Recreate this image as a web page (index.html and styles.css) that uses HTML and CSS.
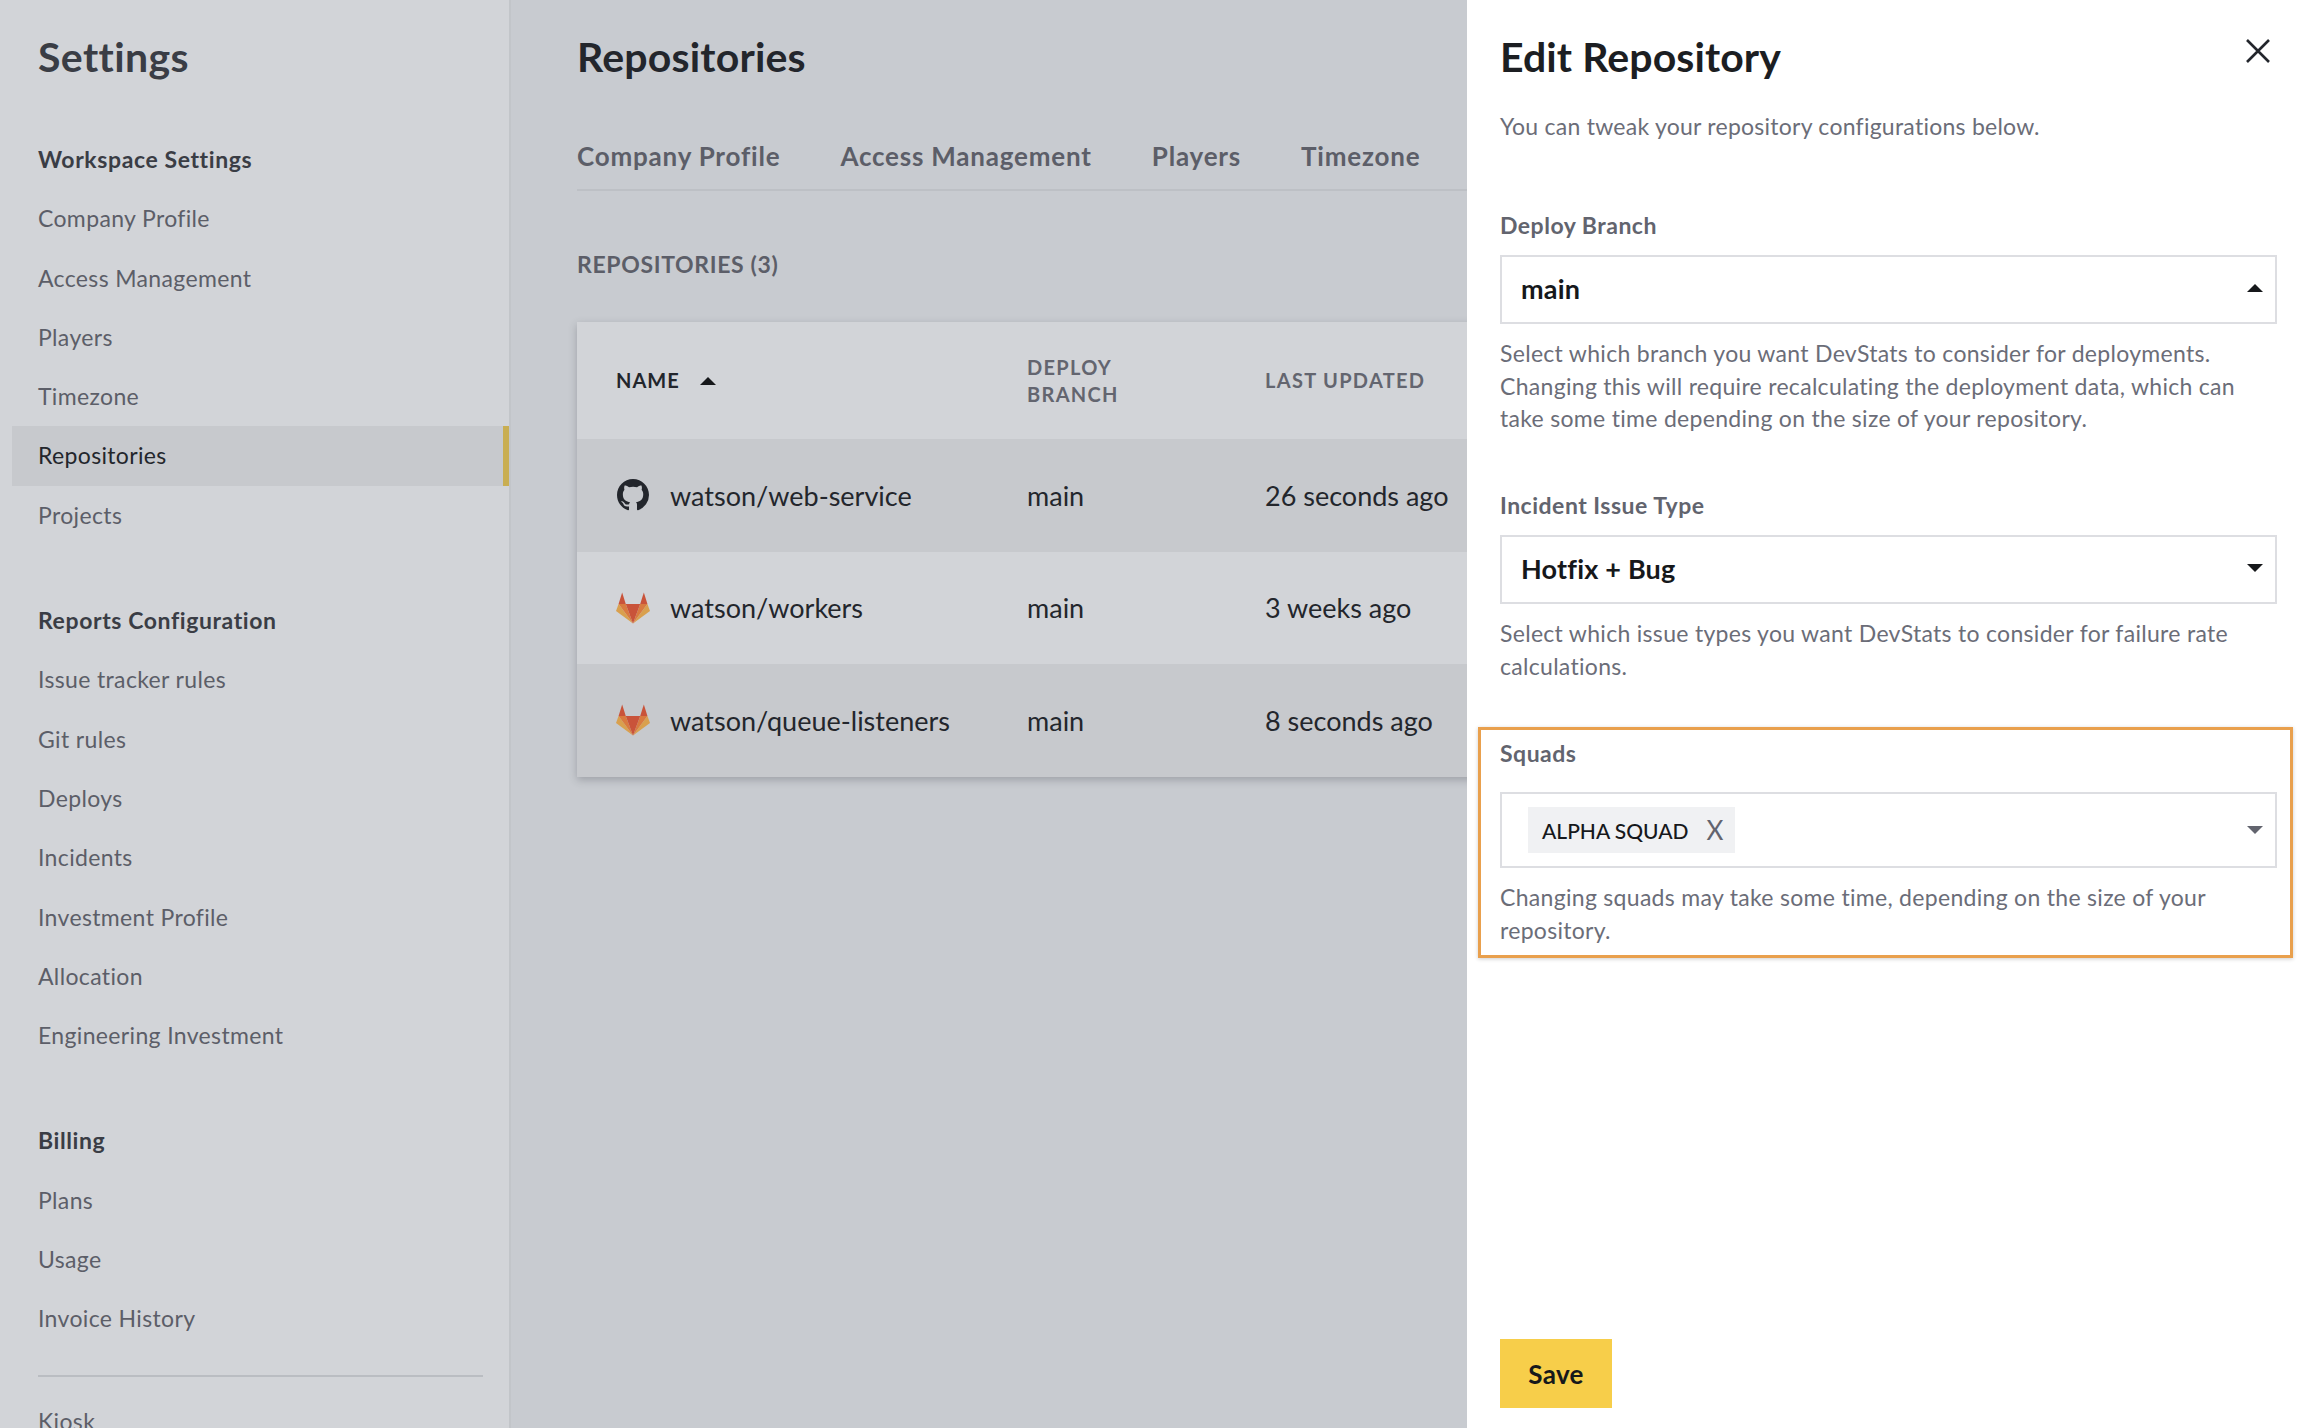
FILE: index.html
```html
<!DOCTYPE html>
<html lang="en">
<head>
    <meta charset="UTF-8">
    <title>Edit Repository</title>
    <link rel="stylesheet" href="styles.css">
</head>
<body>
    <div class="page">
        <aside class="sidebar">
            <h1 class="sidebar-title">Settings</h1>

            <div class="nav-group">
                <div class="nav-heading">Workspace Settings</div>
                <a class="nav-item">Company Profile</a>
                <a class="nav-item">Access Management</a>
                <a class="nav-item">Players</a>
                <a class="nav-item">Timezone</a>
                <a class="nav-item active">Repositories</a>
                <a class="nav-item">Projects</a>
            </div>

            <div class="nav-group">
                <div class="nav-heading">Reports Configuration</div>
                <a class="nav-item">Issue tracker rules</a>
                <a class="nav-item">Git rules</a>
                <a class="nav-item">Deploys</a>
                <a class="nav-item">Incidents</a>
                <a class="nav-item">Investment Profile</a>
                <a class="nav-item">Allocation</a>
                <a class="nav-item">Engineering Investment</a>
            </div>

            <div class="nav-group">
                <div class="nav-heading">Billing</div>
                <a class="nav-item">Plans</a>
                <a class="nav-item">Usage</a>
                <a class="nav-item">Invoice History</a>
            </div>

            <div class="nav-divider"></div>
            <a class="nav-item">Kiosk</a>
        </aside>

        <main class="main">
            <h1 class="main-title">Repositories</h1>

            <nav class="tabs">
                <a class="tab">Company Profile</a>
                <a class="tab">Access Management</a>
                <a class="tab">Players</a>
                <a class="tab">Timezone</a>
            </nav>

            <div class="section-label">REPOSITORIES (3)</div>

            <div class="repo-table">
                <div class="repo-row repo-head">
                    <div class="col-name sorted">NAME <span class="arrow-up dark sort-arrow"></span></div>
                    <div>DEPLOY<br>BRANCH</div>
                    <div>LAST UPDATED</div>
                </div>
                <div class="repo-row shaded">
                    <div class="col-name">
                        <svg class="repo-icon" viewBox="0 0 16 16" fill="#23262c"><path d="M8 0C3.58 0 0 3.58 0 8c0 3.54 2.29 6.53 5.47 7.59.4.07.55-.17.55-.38 0-.19-.01-.82-.01-1.49-2.01.37-2.53-.49-2.69-.94-.09-.23-.48-.94-.82-1.13-.28-.15-.68-.52-.01-.53.63-.01 1.08.58 1.23.82.72 1.21 1.87.87 2.33.66.07-.52.28-.87.51-1.07-1.78-.2-3.64-.89-3.64-3.95 0-.87.31-1.59.82-2.15-.08-.2-.36-1.02.08-2.12 0 0 .67-.21 2.2.82.64-.18 1.32-.27 2-.27.68 0 1.36.09 2 .27 1.53-1.04 2.2-.82 2.2-.82.44 1.1.16 1.92.08 2.12.51.56.82 1.27.82 2.15 0 3.07-1.87 3.75-3.65 3.95.29.25.54.73.54 1.48 0 1.07-.01 1.93-.01 2.2 0 .21.15.46.55.38A8.013 8.013 0 0016 8c0-4.42-3.58-8-8-8z"/></svg>
                        watson/web-service
                    </div>
                    <div>main</div>
                    <div>26 seconds ago</div>
                </div>
                <div class="repo-row">
                    <div class="col-name">
                        <svg class="repo-icon" viewBox="0 0 33 30">
                            <polygon fill="#c9533a" points="6,0 2.5,11 9.5,11"/>
                            <polygon fill="#c9533a" points="27,0 30.5,11 23.5,11"/>
                            <polygon fill="#d9a04e" points="2.5,11 0,18 16.5,30"/>
                            <polygon fill="#d9a04e" points="30.5,11 33,18 16.5,30"/>
                            <polygon fill="#d97a3f" points="2.5,11 9.5,11 16.5,30"/>
                            <polygon fill="#d97a3f" points="30.5,11 23.5,11 16.5,30"/>
                            <polygon fill="#c9533a" points="9.5,11 23.5,11 16.5,30"/>
                        </svg>
                        watson/workers
                    </div>
                    <div>main</div>
                    <div>3 weeks ago</div>
                </div>
                <div class="repo-row shaded">
                    <div class="col-name">
                        <svg class="repo-icon" viewBox="0 0 33 30">
                            <polygon fill="#c9533a" points="6,0 2.5,11 9.5,11"/>
                            <polygon fill="#c9533a" points="27,0 30.5,11 23.5,11"/>
                            <polygon fill="#d9a04e" points="2.5,11 0,18 16.5,30"/>
                            <polygon fill="#d9a04e" points="30.5,11 33,18 16.5,30"/>
                            <polygon fill="#d97a3f" points="2.5,11 9.5,11 16.5,30"/>
                            <polygon fill="#d97a3f" points="30.5,11 23.5,11 16.5,30"/>
                            <polygon fill="#c9533a" points="9.5,11 23.5,11 16.5,30"/>
                        </svg>
                        watson/queue-listeners
                    </div>
                    <div>main</div>
                    <div>8 seconds ago</div>
                </div>
            </div>
        </main>

        <section class="panel">
            <div class="panel-head">
                <h2 class="panel-title">Edit Repository</h2>
                <svg class="close-icon" viewBox="0 0 24 24" fill="none" stroke="#23262c" stroke-width="2.6"><path d="M1 1l22 22M23 1L1 23"/></svg>
            </div>
            <p class="panel-desc">You can tweak your repository configurations below.</p>

            <label class="field-label first">Deploy Branch</label>
            <div class="select">
                <span class="select-value">main</span>
                <span class="arrow-up dark"></span>
            </div>
            <p class="help">Select which branch you want DevStats to consider for deployments. Changing this will require recalculating the deployment data, which can take some time depending on the size of your repository.</p>

            <label class="field-label">Incident Issue Type</label>
            <div class="select">
                <span class="select-value">Hotfix + Bug</span>
                <span class="arrow-down dark"></span>
            </div>
            <p class="help">Select which issue types you want DevStats to consider for failure rate calculations.</p>

            <div class="squads-field">
                <label class="field-label squads-label">Squads</label>
                <div class="select squads-select">
                    <span class="chip">ALPHA SQUAD <span class="chip-x">X</span></span>
                    <span class="arrow-down"></span>
                </div>
                <p class="help">Changing squads may take some time, depending on the size of your repository.</p>
                <div class="highlight"></div>
            </div>

            <button class="save-btn">Save</button>
        </section>
    </div>
</body>
</html>
```

FILE: styles.css
```css
* {
    box-sizing: border-box;
}

body {
    margin: 0;
    font-family: "Lato", "Noto Sans", sans-serif;
    color: #23262c;
}

.page {
    display: flex;
    height: 1428px;
    overflow: hidden;
}

/* sidebar */
.sidebar {
    width: 511px;
    flex-shrink: 0;
    background: #d2d4d8;
    border-right: 2px solid #c2c5c9;
    overflow: hidden;
}

.sidebar-title {
    margin: 0;
    padding-left: 38px;
    height: 130px;
    padding-top: 29px;
    font-size: 41px;
    line-height: 56px;
    font-weight: 700;
    letter-spacing: 0.4px;
    color: #3a3d45;
}

.nav-group {
    margin-bottom: 46px;
}

.nav-heading {
    padding-left: 38px;
    height: 59.3px;
    line-height: 59px;
    font-size: 23px;
    font-weight: 700;
    letter-spacing: 0.6px;
    color: #3a3d45;
}

.nav-item {
    display: block;
    height: 59.3px;
    line-height: 59px;
    margin-left: 12px;
    padding-left: 26px;
    font-size: 23px;
    letter-spacing: 0.35px;
    color: #5c5e68;
}

.nav-item.active {
    background: #c7c9cd;
    border-right: 6px solid #c9ae52;
    color: #23262c;
}

.nav-divider {
    height: 2px;
    margin: -20px 26px 15px 38px;
    background: #babdc2;
}

/* main */
.main {
    flex: 1;
    min-width: 0;
    padding-left: 66px;
    background: #c8cbd0;
    overflow: hidden;
}

.main-title {
    margin: 0;
    height: 114px;
    padding-top: 29px;
    font-size: 41px;
    line-height: 56px;
    font-weight: 700;
    letter-spacing: 0.2px;
    color: #23262c;
}

.tabs {
    display: flex;
    gap: 60px;
    height: 77px;
    border-bottom: 2px solid #bdc0c5;
    white-space: nowrap;
}

.tab {
    font-size: 26px;
    line-height: 84px;
    font-weight: 700;
    letter-spacing: 0.8px;
    color: #5c5e68;
}

.section-label {
    margin-top: 55px;
    margin-bottom: 40px;
    font-size: 23px;
    line-height: 36px;
    font-weight: 700;
    letter-spacing: 0.65px;
    color: #5c5e68;
}

.repo-table {
    width: 1000px;
    box-shadow: 0 3px 8px rgba(60, 64, 72, 0.3);
}

.repo-row {
    display: grid;
    grid-template-columns: 411px 238px 1fr;
    align-items: center;
    height: 112.5px;
    padding-left: 39px;
    background: #d2d4d8;
    font-size: 27px;
    color: #23262c;
}

.repo-row.shaded {
    background: #c7c9cd;
}

.repo-head {
    height: 117px;
    font-size: 20px;
    line-height: 27px;
    font-weight: 700;
    letter-spacing: 1.3px;
    color: #63656f;
}

.col-name {
    display: flex;
    align-items: center;
}

.col-name.sorted {
    color: #23262c;
    letter-spacing: 1px;
}

.sort-arrow {
    margin-left: 20px;
}

.repo-icon {
    width: 34px;
    height: 32px;
    margin-right: 20px;
}

/* edit panel */
.panel {
    width: 837px;
    flex-shrink: 0;
    display: flex;
    flex-direction: column;
    padding: 0 27px 20px 33px;
    background: #fff;
}

.panel-head {
    display: flex;
    justify-content: space-between;
    height: 110px;
    padding-top: 29px;
}

.panel-title {
    margin: 0;
    font-size: 41px;
    line-height: 56px;
    font-weight: 700;
    letter-spacing: 0.1px;
    color: #1c1e22;
}

.close-icon {
    width: 24px;
    height: 24px;
    margin-top: 10px;
    margin-right: 7px;
}

.panel-desc {
    margin: 0;
    font-size: 23px;
    line-height: 32px;
    letter-spacing: 0.25px;
    color: #6b6d78;
}

.field-label {
    display: block;
    margin-top: 54.5px;
    font-size: 23px;
    line-height: 32px;
    font-weight: 700;
    letter-spacing: 0.5px;
    color: #62646e;
}

.field-label.first {
    margin-top: 67px;
}

.select {
    display: flex;
    align-items: center;
    justify-content: space-between;
    height: 69px;
    margin-top: 14px;
    padding: 0 12px 3px 19px;
    border: 2px solid #dddee2;
}

.select-value {
    font-size: 27px;
    font-weight: 700;
    letter-spacing: 0.2px;
    color: #16181b;
}

.arrow-up,
.arrow-down {
    display: inline-block;
    width: 0;
    height: 0;
    border-left: 8px solid transparent;
    border-right: 8px solid transparent;
}

.arrow-up {
    border-bottom: 8px solid #62646e;
}

.arrow-down {
    border-top: 8px solid #62646e;
}

.arrow-up.dark {
    border-bottom-color: #16181b;
}

.arrow-down.dark {
    border-top-color: #16181b;
}

.help {
    margin: 13px 0 0;
    font-size: 23px;
    line-height: 32.5px;
    letter-spacing: 0.3px;
    color: #6b6d78;
}

.squads-field {
    position: relative;
    margin-top: 55px;
}

.field-label.squads-label {
    margin-top: 0;
}

.select.squads-select {
    height: 76px;
    margin-top: 23px;
    padding: 0 12px 0 26px;
}

.chip {
    display: flex;
    align-items: center;
    height: 46px;
    padding: 0 12px 0 14px;
    background: #f0f1f3;
    font-size: 21px;
    font-weight: 500;
    color: #16181b;
}

.chip-x {
    margin-left: 18px;
    font-size: 26px;
    font-weight: 400;
    color: #62646e;
}

.highlight {
    position: absolute;
    top: -10px;
    left: -22px;
    right: -16px;
    bottom: -12px;
    border: 3px solid #e9a04d;
    box-shadow: 0 1px 4px rgba(0, 0, 0, 0.2);
}

.save-btn {
    margin-top: auto;
    width: 112px;
    height: 69px;
    border: none;
    background: #f7ce4a;
    font-family: inherit;
    font-size: 26px;
    font-weight: 700;
    letter-spacing: 0.3px;
    color: #16181b;
}
```
